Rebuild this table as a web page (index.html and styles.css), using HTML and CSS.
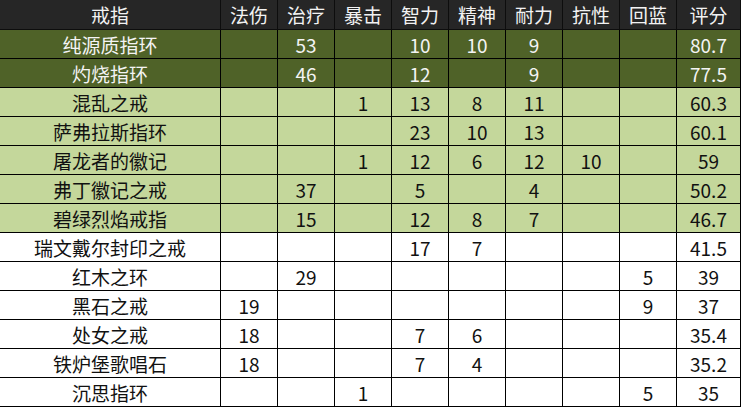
FILE: index.html
```html
<!DOCTYPE html>
<html lang="zh">
<head>
<meta charset="utf-8">
<link rel="stylesheet" href="styles.css">
</head>
<body>
<div class="sheet">
  <div class="row head"><div>戒指</div><div>法伤</div><div>治疗</div><div>暴击</div><div>智力</div><div>精神</div><div>耐力</div><div>抗性</div><div>回蓝</div><div>评分</div></div>
  <div class="row dark"><div>纯源质指环</div><div></div><div>53</div><div></div><div>10</div><div>10</div><div>9</div><div></div><div></div><div>80.7</div></div>
  <div class="row dark"><div>灼烧指环</div><div></div><div>46</div><div></div><div>12</div><div></div><div>9</div><div></div><div></div><div>77.5</div></div>
  <div class="row light"><div>混乱之戒</div><div></div><div></div><div>1</div><div>13</div><div>8</div><div>11</div><div></div><div></div><div>60.3</div></div>
  <div class="row light"><div>萨弗拉斯指环</div><div></div><div></div><div></div><div>23</div><div>10</div><div>13</div><div></div><div></div><div>60.1</div></div>
  <div class="row light"><div>屠龙者的徽记</div><div></div><div></div><div>1</div><div>12</div><div>6</div><div>12</div><div>10</div><div></div><div>59</div></div>
  <div class="row light"><div>弗丁徽记之戒</div><div></div><div>37</div><div></div><div>5</div><div></div><div>4</div><div></div><div></div><div>50.2</div></div>
  <div class="row light"><div>碧绿烈焰戒指</div><div></div><div>15</div><div></div><div>12</div><div>8</div><div>7</div><div></div><div></div><div>46.7</div></div>
  <div class="row plain"><div>瑞文戴尔封印之戒</div><div></div><div></div><div></div><div>17</div><div>7</div><div></div><div></div><div></div><div>41.5</div></div>
  <div class="row plain"><div>红木之环</div><div></div><div>29</div><div></div><div></div><div></div><div></div><div></div><div>5</div><div>39</div></div>
  <div class="row plain"><div>黑石之戒</div><div>19</div><div></div><div></div><div></div><div></div><div></div><div></div><div>9</div><div>37</div></div>
  <div class="row plain"><div>处女之戒</div><div>18</div><div></div><div></div><div>7</div><div>6</div><div></div><div></div><div></div><div>35.4</div></div>
  <div class="row plain"><div>铁炉堡歌唱石</div><div>18</div><div></div><div></div><div>7</div><div>4</div><div></div><div></div><div></div><div>35.2</div></div>
  <div class="row plain"><div>沉思指环</div><div></div><div></div><div>1</div><div></div><div></div><div></div><div></div><div>5</div><div>35</div></div>
</div>
</body>
</html>
```
FILE: styles.css
```css
html, body {
  margin: 0;
  padding: 0;
  background: #ffffff;
}
.sheet {
  width: 741px;
  display: flex;
  flex-direction: column;
  font-family: "Noto Sans CJK SC", "Microsoft YaHei", sans-serif;
  font-size: 19px;
}
.row {
  display: grid;
  grid-template-columns: 221px repeat(8, 57px) 64px;
  height: 29px;
}
.row.head {
  height: 30px;
}
.row > div {
  box-sizing: border-box;
  height: 100%;
  border-right: 1px solid #000000;
  border-bottom: 1px solid #000000;
  display: flex;
  align-items: center;
  justify-content: center;
  padding-top: 1px;
  line-height: 20px;
  white-space: nowrap;
}
.head > div {
  background: #262626;
  color: #f2f2f2;
  border-color: #0d0d0d;
}
.dark > div {
  background: #4f6228;
  color: #f4f4f4;
}
.light > div {
  background: #c4d79b;
  color: #111111;
}
.plain > div {
  background: #ffffff;
  color: #111111;
}
```
